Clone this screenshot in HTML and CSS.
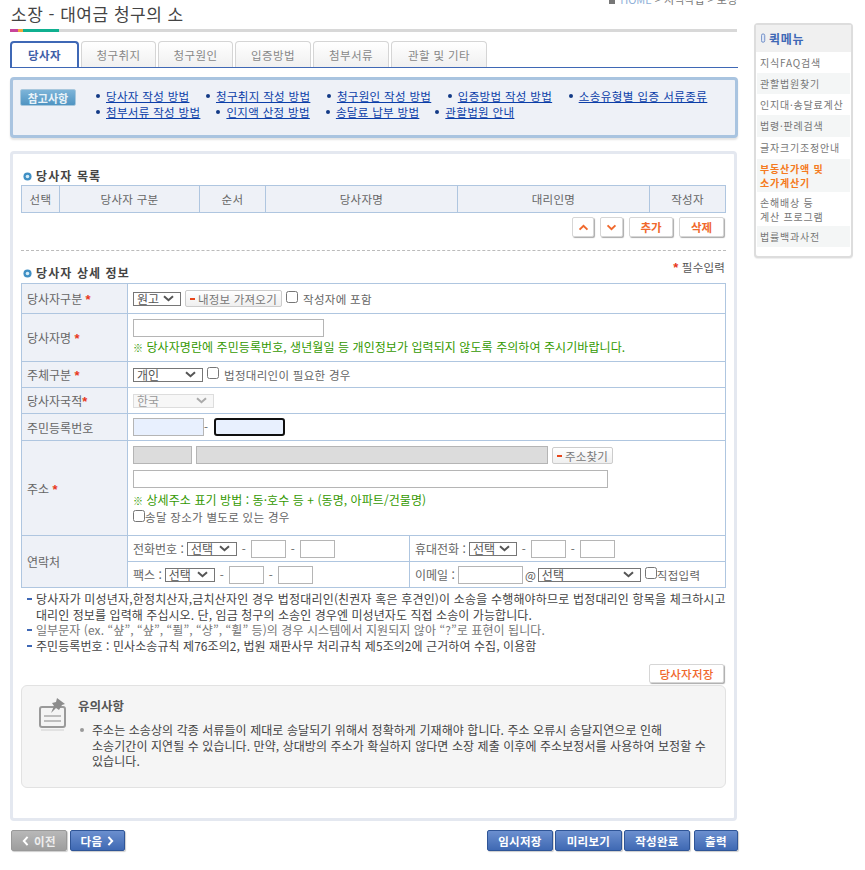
FILE: index.html
```html
<!DOCTYPE html>
<html lang="ko">
<head>
<meta charset="utf-8">
<title>소장 - 대여금 청구의 소</title>
<link rel="stylesheet" href="styles.css">
</head>
<body>
<div class="page">
  <main class="main">
    <header class="head">
      <h1 class="title">소장 - 대여금 청구의 소</h1>
      <div class="crumb"><span class="crumb-mark"></span><span class="crumb-home">HOME</span> &gt; 지식작업 &gt; 보정</div>
    </header>
    <div class="colorbar"><i class="c1"></i><i class="c2"></i><i class="c3"></i></div>
    <nav class="tabs">
      <a class="tab on t1">당사자</a>
      <a class="tab t2">청구취지</a>
      <a class="tab t2">청구원인</a>
      <a class="tab t3">입증방법</a>
      <a class="tab t4">첨부서류</a>
      <a class="tab t5">관할 및 기타</a>
    </nav>
    <section class="refbox">
      <span class="badge">참고사항</span>
      <div class="reflinks">
        <ul class="refrow r1">
          <li><a>당사자 작성 방법</a></li>
          <li><a>청구취지 작성 방법</a></li>
          <li><a>청구원인 작성 방법</a></li>
          <li><a>입증방법 작성 방법</a></li>
          <li><a>소송유형별 입증 서류종류</a></li>
        </ul>
        <ul class="refrow r2">
          <li><a>첨부서류 작성 방법</a></li>
          <li><a>인지액 산정 방법</a></li>
          <li><a>송달료 납부 방법</a></li>
          <li><a>관할법원 안내</a></li>
        </ul>
      </div>
    </section>

    <section class="panel">
      <h2 class="sec sec1"><svg class="dot" viewBox="0 0 10 10" width="9" height="9"><circle cx="5" cy="5" r="4.5" fill="#3f8fc4"/><circle cx="5" cy="5" r="2" fill="#d5ecf8"/></svg>당사자 목록</h2>
      <table class="list">
        <colgroup><col class="l1"><col class="l2"><col class="l3"><col class="l4"><col class="l5"><col class="l6"></colgroup>
        <tr><th>선택</th><th>당사자 구분</th><th>순서</th><th>당사자명</th><th>대리인명</th><th>작성자</th></tr>
      </table>
      <div class="actions">
        <button class="obtn up" type="button"><svg viewBox="0 0 12 8" width="11" height="7"><path d="M1.5 6.5 6 2l4.5 4.5" fill="none" stroke="#f0682c" stroke-width="2.2"/></svg></button>
        <button class="obtn down" type="button"><svg viewBox="0 0 12 8" width="11" height="7"><path d="M1.5 1.5 6 6l4.5-4.5" fill="none" stroke="#f0682c" stroke-width="2.2"/></svg></button>
        <button class="obtn add" type="button">추가</button>
        <button class="obtn del" type="button">삭제</button>
      </div>
      <div class="dash"></div>
      <div class="sec2wrap">
        <h2 class="sec"><svg class="dot" viewBox="0 0 10 10" width="9" height="9"><circle cx="5" cy="5" r="4.5" fill="#3f8fc4"/><circle cx="5" cy="5" r="2" fill="#d5ecf8"/></svg>당사자 상세 정보</h2>
        <div class="reqnote"><span class="req">*</span> 필수입력</div>
      </div>
      <table class="detail">
        <colgroup><col class="d1"><col class="d2"><col class="d3"></colgroup>
        <tr class="h30">
          <th>당사자구분 <span class="req">*</span></th>
          <td colspan="2"><div class="line">
            <div class="sel w48" role="combobox" aria-expanded="false"><span>원고</span><svg class="chev" viewBox="0 0 11 7" width="11" height="7"><path d="M1 1.2 5.5 5.2 10 1.2" fill="none" stroke="#555" stroke-width="2"/></svg></div>
            <button class="gbtn me" type="button"><i class="minus"></i>내정보 가져오기</button>
            <input class="chk" type="checkbox"><span class="chklabel l5px">작성자에 포함</span>
          </div></td>
        </tr>
        <tr class="h48">
          <th>당사자명 <span class="req">*</span></th>
          <td colspan="2">
            <input class="inp w191" type="text">
            <p class="hint h-name"><b>※</b> 당사자명란에 주민등록번호, 생년월일 등 개인정보가 입력되지 않도록 주의하여 주시기바랍니다.</p>
          </td>
        </tr>
        <tr class="h26">
          <th>주체구분 <span class="req">*</span></th>
          <td colspan="2"><div class="line">
            <div class="sel w70" role="combobox" aria-expanded="false"><span>개인</span><svg class="chev" viewBox="0 0 11 7" width="11" height="7"><path d="M1 1.2 5.5 5.2 10 1.2" fill="none" stroke="#555" stroke-width="2"/></svg></div>
            <input class="chk" type="checkbox"><span class="chklabel l5px">법정대리인이 필요한 경우</span>
          </div></td>
        </tr>
        <tr class="h26">
          <th>당사자국적<span class="req">*</span></th>
          <td colspan="2"><div class="line"><div class="sel w81 off" role="combobox" aria-disabled="true" aria-expanded="false"><span>한국</span><svg class="chev" viewBox="0 0 11 7" width="11" height="7"><path d="M1 1.2 5.5 5.2 10 1.2" fill="none" stroke="#aaa" stroke-width="2"/></svg></div></div></td>
        </tr>
        <tr class="h27">
          <th>주민등록번호</th>
          <td colspan="2"><div class="line">
            <input class="inp w71 blue" type="text"><span class="sep0">-</span><input class="inp w71 blue focus" type="text">
          </div></td>
        </tr>
        <tr class="h95">
          <th>주소 <span class="req">*</span></th>
          <td colspan="2" class="addr">
            <div class="line">
              <input class="inp w59 ro" type="text" readonly>
              <input class="inp w352 ro" type="text" readonly>
              <button class="gbtn find" type="button"><i class="minus"></i>주소찾기</button>
            </div>
            <input class="inp w475 a2" type="text">
            <p class="hint h-addr"><b>※</b> 상세주소 표기 방법 : 동·호수 등 + (동명, 아파트/건물명)</p>
            <div class="line chkline"><input class="chk flush" type="checkbox"><span class="chklabel">송달 장소가 별도로 있는 경우</span></div>
          </td>
        </tr>
        <tr class="h26">
          <th rowspan="2">연락처</th>
          <td><div class="line">
            <span class="lbl">전화번호 :</span>
            <div class="sel w50" role="combobox" aria-expanded="false"><span>선택</span><svg class="chev" viewBox="0 0 11 7" width="11" height="7"><path d="M1 1.2 5.5 5.2 10 1.2" fill="none" stroke="#555" stroke-width="2"/></svg></div>
            <span class="sep">-</span><input class="inp w35" type="text"><span class="sep">-</span><input class="inp w35" type="text">
          </div></td>
          <td><div class="line">
            <span class="lbl">휴대전화 :</span>
            <div class="sel w48" role="combobox" aria-expanded="false"><span>선택</span><svg class="chev" viewBox="0 0 11 7" width="11" height="7"><path d="M1 1.2 5.5 5.2 10 1.2" fill="none" stroke="#555" stroke-width="2"/></svg></div>
            <span class="sep">-</span><input class="inp w35" type="text"><span class="sep">-</span><input class="inp w35" type="text">
          </div></td>
        </tr>
        <tr class="h26">
          <td><div class="line">
            <span class="lbl">팩스 :</span>
            <div class="sel w50" role="combobox" aria-expanded="false"><span>선택</span><svg class="chev" viewBox="0 0 11 7" width="11" height="7"><path d="M1 1.2 5.5 5.2 10 1.2" fill="none" stroke="#555" stroke-width="2"/></svg></div>
            <span class="sep">-</span><input class="inp w35" type="text"><span class="sep">-</span><input class="inp w35" type="text">
          </div></td>
          <td><div class="line">
            <span class="lbl">이메일 :</span>
            <input class="inp w65" type="text"><span class="at">@</span>
            <div class="sel w103" role="combobox" aria-expanded="false"><span>선택</span><svg class="chev" viewBox="0 0 11 7" width="11" height="7"><path d="M1 1.2 5.5 5.2 10 1.2" fill="none" stroke="#555" stroke-width="2"/></svg></div>
            <input class="chk tight" type="checkbox"><span class="chklabel">직접입력</span>
          </div></td>
        </tr>
      </table>
      <ul class="notes">
        <li><span class="wide">당사자가 미성년자,한정치산자,금치산자인 경우 법정대리인(친권자 혹은 후견인)이 소송을 수행해야하므로 법정대리인 항목을 체크하시고</span><br>대리인 정보를 입력해 주십시오. 단, 임금 청구의 소송인 경우엔 미성년자도 직접 소송이 가능합니다.</li>
        <li class="soft">일부문자 (ex. “샾”, “샾”, “퓔”, “샹”, “휠” 등)의 경우 시스템에서 지원되지 않아 “?”로 표현이 됩니다.</li>
        <li>주민등록번호 : 민사소송규칙 제76조의2, 법원 재판사무 처리규칙 제5조의2에 근거하여 수집, 이용함</li>
      </ul>
      <div class="savewrap"><button class="obtn save" type="button">당사자저장</button></div>
      <section class="notice">
        <svg class="pin" viewBox="0 0 30 36" width="30" height="36">
          <rect x="2" y="9" width="25" height="20" rx="2" fill="#f4f4f4" stroke="#9a9a9a" stroke-width="2"/>
          <path d="M6 18h17M6 23h17" stroke="#aaa" stroke-width="1.5"/>
          <path d="M19 0l8 6-3 1-3 5-3-2-5 5 3-7-2-3 4-1z" fill="#8c8c8c"/>
          <path d="M3 32h23" stroke="#e2e2e2" stroke-width="2"/>
        </svg>
        <div class="notice-body">
          <h3 class="notice-title">유의사항</h3>
          <p class="notice-text">주소는 소송상의 각종 서류들이 제대로 송달되기 위해서 정확하게 기재해야 합니다. 주소 오류시 송달지연으로 인해<br>소송기간이 지연될 수 있습니다. 만약, 상대방의 주소가 확실하지 않다면 소장 제출 이후에 주소보정서를 사용하여 보정할 수<br>있습니다.</p>
        </div>
      </section>
    </section>

    <footer class="foot">
      <div class="foot-left">
        <button class="bbtn grey prev" type="button"><svg viewBox="0 0 8 12" width="7" height="10"><path d="M6.5 1 2 6l4.5 5" fill="none" stroke="#fff" stroke-width="2.4"/></svg>이전</button>
        <button class="bbtn next" type="button">다음<svg viewBox="0 0 8 12" width="7" height="10"><path d="M1.5 1 6 6l-4.5 5" fill="none" stroke="#fff" stroke-width="2.4"/></svg></button>
      </div>
      <div class="foot-right">
        <button class="bbtn b66" type="button">임시저장</button>
        <button class="bbtn b67" type="button">미리보기</button>
        <button class="bbtn b66 gapr" type="button">작성완료</button>
        <button class="bbtn b44" type="button">출력</button>
      </div>
    </footer>
  </main>

  <aside class="quick">
    <div class="quick-head"><svg viewBox="0 0 6 12" width="5" height="11"><rect x=".5" y=".5" width="4" height="10" rx="2" fill="#dfe7f5" stroke="#5d7fc0"/></svg>퀵메뉴</div>
    <ul class="quick-list">
      <li>지식FAQ검색</li>
      <li class="alt">관할법원찾기</li>
      <li>인지대·송달료계산</li>
      <li class="alt tall1">법령·판례검색</li>
      <li class="tall1">글자크기조정안내</li>
      <li class="alt hot">부동산가액 및<br>소가계산기</li>
      <li class="two">손해배상 등<br>계산 프로그램</li>
      <li class="alt">법률백과사전</li>
    </ul>
  </aside>
</div>
</body>
</html>
```

FILE: styles.css
```css
* { box-sizing: border-box; }
html, body { margin: 0; padding: 0; height: 870px; overflow: hidden; background: #fff; }
body, button, input, select, table {
  font-family: "Noto Sans CJK KR", "Noto Sans", sans-serif;
  font-size: 11.5px;
  color: #555;
}
ul { list-style: none; margin: 0; padding: 0; }
p, h1, h2, h3 { margin: 0; }

.page { display: flex; align-items: flex-start; padding-left: 10px; }
.main { width: 728px; flex: none; }

.head { height: 29px; display: flex; justify-content: space-between; align-items: flex-start; position: relative; }
.title { font-size: 17px; line-height: 20px; margin: 4px 0 0 1px; font-weight: 400; color: #444; letter-spacing: .5px; }
.crumb { margin: -9px 1px 0 0; font-size: 11px; line-height: 16px; color: #777; }
.crumb-mark { display: inline-block; width: 6px; height: 6px; background: #777; margin-right: 5px; }
.crumb-home { color: #8fb0d8; }

.colorbar { height: 3px; width: 727px; background: #d8d8d8; display: flex; }
.colorbar i { display: block; height: 3px; }
.c1 { width: 8px; background: #c8449a; }
.c2 { width: 5px; background: #f5a63c; }
.c3 { width: 36px; background: #10b090; }

.tabs { margin-top: 9px; height: 27px; display: flex; gap: 2px; border-bottom: 1px solid #3f68b5; }
.tab {
  height: 26px; border: 1px solid #d5d5d5; border-bottom: 0; border-radius: 4px 4px 0 0;
  background: linear-gradient(#fff, #f0f0f0); color: #888; font-size: 11.5px;
  display: flex; align-items: center; justify-content: center; letter-spacing: .4px;
}
.t1 { width: 69px; }
.t2 { width: 75px; }
.t3 { width: 76px; }
.t4 { width: 76px; }
.t5 { width: 96px; }
.tab.on { border: 2px solid #3f68b5; border-bottom: 0; background: #fff; color: #3f5fa8; font-weight: 700; height: 26px; }

.refbox {
  margin-top: 9px; height: 61px; border: 3px solid #a9c4e0; border-radius: 4px; background: #eef1f7;
  box-shadow: 0 2px 2px #e4e4e4; display: flex; align-items: flex-start; padding: 9px 0 0 7px;
}
.badge {
  width: 56px; height: 17px; border-radius: 2px; background: linear-gradient(#7db4d8, #4f94c2);
  border: 1px solid #a9c8dd; color: #e9f3f9; font-size: 11px; font-weight: 700;
  display: flex; align-items: center; justify-content: center; flex: none;
}
.reflinks { margin: -1px 0 0 20px; }
.refrow { display: flex; height: 16px; align-items: center; }
.refrow li { display: flex; align-items: center; white-space: nowrap; }
.refrow li::before { content: ""; width: 4px; height: 4px; border-radius: 50%; background: #123a86; margin-right: 6px; }
.r1 li { margin-right: 16.5px; }
.r2 li { margin-right: 16px; }
.refrow a { color: #0b3ea8; text-decoration: underline; font-size: 11.5px; letter-spacing: .33px; }
.r1 li:last-child a { letter-spacing: .45px; }

.panel {
  margin-top: 13px; width: 727px; height: 670px; border: 3px solid #e4e8f0; border-radius: 4px;
  padding: 0 8px; background: #fff;
}
.sec { font-size: 12px; font-weight: 700; color: #444; line-height: 16px; display: flex; align-items: center; letter-spacing: 1.1px; }
.sec1 { height: 18px; margin: 13px 0 0; }
.dot { margin: 0 4px 0 2px; flex: none; }

table { border-collapse: collapse; table-layout: fixed; width: 704px; }
.list th { height: 27px; border: 1px solid #afc6e0; background: #eef1f7; font-weight: 400; color: #666; padding: 0; font-size: 11.5px; letter-spacing: .3px; }
.l1 { width: 38px; } .l2 { width: 140px; } .l3 { width: 66px; } .l4 { width: 192px; } .l5 { width: 192px; } .l6 { width: 76px; }

.actions { margin-top: 4px; height: 20px; display: flex; justify-content: flex-end; gap: 6px; padding-right: 2px; }
.obtn {
  height: 20px; padding: 0; background: #fff; border: 1px solid #d6d6d6; border-radius: 2px;
  box-shadow: 1px 1px 1px #aaa; color: #f0682c; font-weight: 700; font-size: 11.5px;
  display: flex; align-items: center; justify-content: center;
}
.up { width: 22px; }
.down { width: 23px; }
.add { width: 44px; }
.del { width: 45px; }
.dash { margin-top: 13px; border-top: 1px dashed #bbb; height: 1px; }

.sec2wrap { height: 32px; display: flex; justify-content: space-between; position: relative; padding-top: 14px; }
.sec2wrap .sec { height: 16px; }
.reqnote { color: #555; font-size: 11.5px; line-height: 16px; margin-top: -6px; letter-spacing: .2px; padding-right: 1px; }
.req { color: #e8381a; font-weight: 700; font-family: "Liberation Sans", sans-serif; font-size: 13px; line-height: 1; }

.detail th, .detail td { border: 1px solid #afc6e0; padding: 0 0 0 5px; }
.detail th { background: #eef1f7; font-weight: 400; text-align: left; color: #666; font-size: 12px; }
.detail td { color: #666; vertical-align: middle; }
.d1 { width: 106px; } .d2 { width: 282px; } .d3 { width: 316px; }
.h30 { height: 30px; } .h48 { height: 48px; } .h26 { height: 26px; } .h27 { height: 27px; } .h95 { height: 95px; }
.line { display: flex; align-items: center; white-space: nowrap; }

.sel {
  height: 14px; border: 1px solid #767676; background: #fff; padding: 0 6px 0 3px; flex: none;
  display: flex; align-items: center; justify-content: space-between;
  font-size: 12px; line-height: 11px; color: #555;
}
.chev { display: block; flex: none; }
.w48 { width: 48px; } .w50 { width: 50px; } .w70 { width: 70px; } .w81 { width: 81px; } .w103 { width: 103px; }
.sel.off { border-color: #ddd; background: #f7f7f7; color: #999; }
.inp { height: 18px; border: 1px solid #b5b5b5; background: #fff; padding: 0; margin: 0; display: block; }
.w191 { width: 191px; } .w71 { width: 71px; } .w59 { width: 59px; } .w352 { width: 352px; margin-left: 4px; } .w475 { width: 475px; } .w35 { width: 35px; } .w65 { width: 65px; }
.blue { background: #e8f0fe; }
.focus { margin-left: 0; border: 2px solid #101010; border-radius: 3px; }
.ro { background: #dcdcdc; }
.sep0 { width: 10px; color: #666; }
.sep { width: 14px; text-align: center; color: #666; }
.lbl { color: #666; margin-right: 3px; font-size: 12px; }
.at { width: 15px; color: #555; text-align: center; }

.gbtn {
  height: 17px; border: 1px solid #ccc; border-radius: 2px; background: linear-gradient(#fff, #efefef);
  color: #777; font-size: 11.5px; padding: 0; display: flex; align-items: center; justify-content: center; letter-spacing: .2px;
}
.minus { display: block; width: 5px; height: 2px; background: #e8461a; margin-right: 3px; }
.me { width: 97px; margin-left: 4px; }
.find { width: 61px; margin-left: 4px; margin-top: 2px; }
.chk { width: 12px; height: 12px; margin: 0 0 4px 4px; flex: none; }
.chk.flush { margin-left: 0; margin-bottom: 2px; }
.chk.tight { margin-left: 4px; margin-bottom: 4px; }
.chklabel { color: #666; letter-spacing: .3px; }
.l5px { margin-left: 5px; }
.hint { color: #339900; font-size: 12px; line-height: 16px; letter-spacing: .07px; }
.hint b { font-size: 10px; }
.h-name { margin-top: 2px; }
.addr { vertical-align: top !important; padding-top: 4px !important; }
.a2 { margin-top: 6px; }
.h-addr { margin-top: 4px; }
.chkline { margin-top: 0; }

.notes { margin-top: 3px; padding-left: 15px; font-size: 12px; line-height: 15.5px; color: #444; white-space: nowrap; }
.notes li { position: relative; letter-spacing: .07px; }
.notes li::before { content: ""; position: absolute; left: -9px; top: 7px; width: 5px; height: 2px; background: #3f68b5; }
.wide { letter-spacing: .17px; }
.soft { color: #777; }

.savewrap { margin-top: 11px; height: 21px; display: flex; justify-content: flex-end; padding-right: 2px; }
.save { width: 75px; height: 19px; font-weight: 500; letter-spacing: .2px; }

.notice {
  height: 103px; border: 1px solid #e2e2e2; border-radius: 6px; background: #f5f5f5;
  display: flex; padding: 12px 0 0 16px;
}
.pin { flex: none; margin-right: 10px; }
.notice-title { font-size: 12.5px; font-weight: 700; line-height: 16px; color: #555; }
.notice-text { margin-top: 8px; padding-left: 14px; position: relative; font-size: 12px; line-height: 15.5px; color: #444; white-space: nowrap; letter-spacing: .07px; }
.notice-text::before { content: ""; position: absolute; left: 2px; top: 6px; width: 4px; height: 4px; border-radius: 50%; background: #999; }

.foot { margin-top: 9px; display: flex; justify-content: space-between; height: 21px; padding-left: 1px; }
.foot-left, .foot-right { display: flex; gap: 3px; }
.foot-right { gap: 2px; }
.bbtn {
  height: 21px; border: 1px solid #2f5597; border-radius: 2px; padding: 0;
  background: linear-gradient(#6b8fcf, #3f69b3); color: #fff; font-weight: 700; font-size: 11.5px;
  display: flex; align-items: center; justify-content: center; gap: 5px; box-shadow: 1px 1px 1px #ccc; letter-spacing: .3px;
}
.grey { background: linear-gradient(#b8b8b8, #9e9e9e); border-color: #999; color: #eee; }
.prev { width: 56px; }
.next { width: 55px; }
.b66 { width: 66px; }
.b67 { width: 67px; }
.gapr { margin-right: 2px; }
.b44 { width: 44px; }

.quick {
  margin: 23px 0 0 16px; width: 99px; height: 235px; border: 2px solid #ddd; border-radius: 4px; padding: 0 1px;
  box-shadow: 0 1px 1px #eee; flex: none; background: #fff;
}
.quick-head {
  height: 27px; margin: 0 -1px; background: #f0f0f0; color: #3f68b5; font-weight: 700; font-size: 12px;
  display: flex; align-items: center; padding-left: 5px; gap: 3px; letter-spacing: .7px;
}
.quick-list li { height: 21px; line-height: 21px; padding-left: 3px; font-size: 10px; color: #777; white-space: nowrap; letter-spacing: .8px; }
.quick-list li.alt { background: #f4f6f6; }
.quick-list li.tall1 { height: 22px; }
.quick-list li.hot { height: 33px; line-height: 14px; padding-top: 3px; color: #f47a20; font-weight: 700; }
.quick-list li.two { height: 34px; line-height: 14px; padding-top: 4px; }
```
